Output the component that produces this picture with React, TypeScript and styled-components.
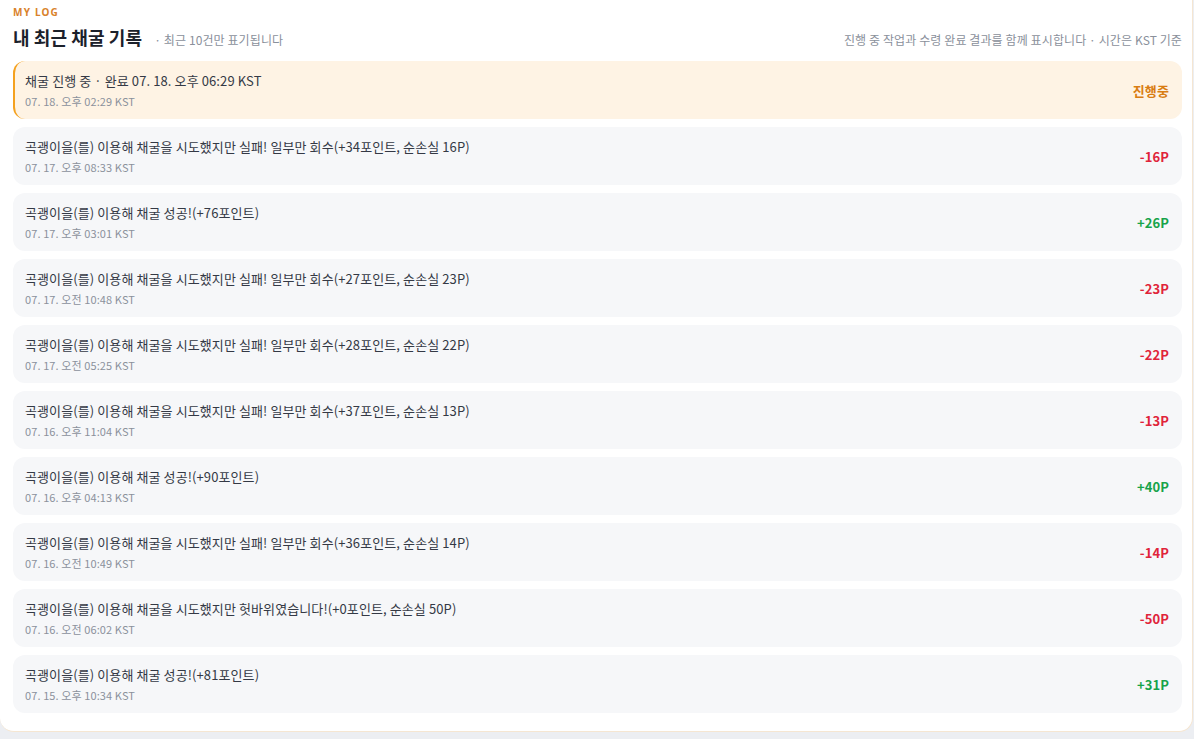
import React from 'react'
import styled, { createGlobalStyle } from 'styled-components'

const GlobalStyle = createGlobalStyle`
  html, body {
    margin: 0;
    padding: 0;
    background: #eceef2;
  }
  body {
    font-family: "Noto Sans CJK KR", "Noto Sans", sans-serif;
    color: #2f3441;
    letter-spacing: 0.1px;
  }
`

type Kind = 'pending' | 'loss' | 'gain'

interface LogEntry {
  title: string
  time: string
  value: string
  kind: Kind
}

const entries: LogEntry[] = [
  { title: '채굴 진행 중 · 완료 07. 18. 오후 06:29 KST', time: '07. 18. 오후 02:29 KST', value: '진행중', kind: 'pending' },
  { title: '곡괭이을(를) 이용해 채굴을 시도했지만 실패! 일부만 회수(+34포인트, 순손실 16P)', time: '07. 17. 오후 08:33 KST', value: '-16P', kind: 'loss' },
  { title: '곡괭이을(를) 이용해 채굴 성공!(+76포인트)', time: '07. 17. 오후 03:01 KST', value: '+26P', kind: 'gain' },
  { title: '곡괭이을(를) 이용해 채굴을 시도했지만 실패! 일부만 회수(+27포인트, 순손실 23P)', time: '07. 17. 오전 10:48 KST', value: '-23P', kind: 'loss' },
  { title: '곡괭이을(를) 이용해 채굴을 시도했지만 실패! 일부만 회수(+28포인트, 순손실 22P)', time: '07. 17. 오전 05:25 KST', value: '-22P', kind: 'loss' },
  { title: '곡괭이을(를) 이용해 채굴을 시도했지만 실패! 일부만 회수(+37포인트, 순손실 13P)', time: '07. 16. 오후 11:04 KST', value: '-13P', kind: 'loss' },
  { title: '곡괭이을(를) 이용해 채굴 성공!(+90포인트)', time: '07. 16. 오후 04:13 KST', value: '+40P', kind: 'gain' },
  { title: '곡괭이을(를) 이용해 채굴을 시도했지만 실패! 일부만 회수(+36포인트, 순손실 14P)', time: '07. 16. 오전 10:49 KST', value: '-14P', kind: 'loss' },
  { title: '곡괭이을(를) 이용해 채굴을 시도했지만 헛바위였습니다!(+0포인트, 순손실 50P)', time: '07. 16. 오전 06:02 KST', value: '-50P', kind: 'loss' },
  { title: '곡괭이을(를) 이용해 채굴 성공!(+81포인트)', time: '07. 15. 오후 10:34 KST', value: '+31P', kind: 'gain' },
]

const valueColors: Record<Kind, string> = {
  pending: '#d97d12',
  loss: '#e0243a',
  gain: '#17a34a',
}

const Card = styled.section`
  width: 1193px;
  box-sizing: border-box;
  background: #fff;
  border: 1px solid #f5e6d2;
  border-top: none;
  border-left: none;
  border-radius: 0 0 14px 14px;
  padding: 5px 10px 18px 13px;
`

const Eyebrow = styled.div`
  font-family: "Noto Sans", "Noto Sans CJK KR", sans-serif;
  font-size: 10px;
  line-height: 14px;
  font-weight: 700;
  letter-spacing: 1.2px;
  color: #d9822b;
`

const HeaderRow = styled.div`
  display: flex;
  align-items: baseline;
  justify-content: space-between;
  margin-top: 6px;
  margin-bottom: 12px;
  height: 24px;
`

const TitleGroup = styled.div`
  display: flex;
  align-items: baseline;
  gap: 12px;
`

const Title = styled.h1`
  margin: 0;
  font-size: 18px;
  line-height: 24px;
  font-weight: 700;
  color: #1c212b;
`

const Muted = styled.span`
  font-size: 12px;
  color: #8a909b;
`

const List = styled.div`
  display: flex;
  flex-direction: column;
  gap: 8px;
`

const Row = styled.div<{ $kind: Kind }>`
  display: flex;
  align-items: center;
  justify-content: space-between;
  height: 58px;
  box-sizing: border-box;
  padding: 0 13px 0 ${p => (p.$kind === 'pending' ? '10px' : '12px')};
  border-radius: 12px;
  background: ${p => (p.$kind === 'pending' ? '#fef3e4' : '#f6f7f9')};
  border-left: ${p => (p.$kind === 'pending' ? '2px solid #f4a11f' : 'none')};
`

const Texts = styled.div`
  display: flex;
  flex-direction: column;
  gap: 2px;
`

const RowTitle = styled.div`
  font-size: 13px;
  line-height: 20px;
  color: #343945;
`

const RowTime = styled.div`
  font-size: 11px;
  line-height: 16px;
  color: #8b919c;
`

const Value = styled.div<{ $kind: Kind }>`
  font-size: 13px;
  font-weight: 700;
  color: ${p => valueColors[p.$kind]};
`

export default function App() {
  return (
    <>
      <GlobalStyle />
      <Card>
        <Eyebrow>MY LOG</Eyebrow>
        <HeaderRow>
          <TitleGroup>
            <Title>내 최근 채굴 기록</Title>
            <Muted>· 최근 10건만 표기됩니다</Muted>
          </TitleGroup>
          <Muted>진행 중 작업과 수령 완료 결과를 함께 표시합니다 · 시간은 KST 기준</Muted>
        </HeaderRow>
        <List>
          {entries.map((e, i) => (
            <Row key={i} $kind={e.kind}>
              <Texts>
                <RowTitle>{e.title}</RowTitle>
                <RowTime>{e.time}</RowTime>
              </Texts>
              <Value $kind={e.kind}>{e.value}</Value>
            </Row>
          ))}
        </List>
      </Card>
    </>
  )
}
